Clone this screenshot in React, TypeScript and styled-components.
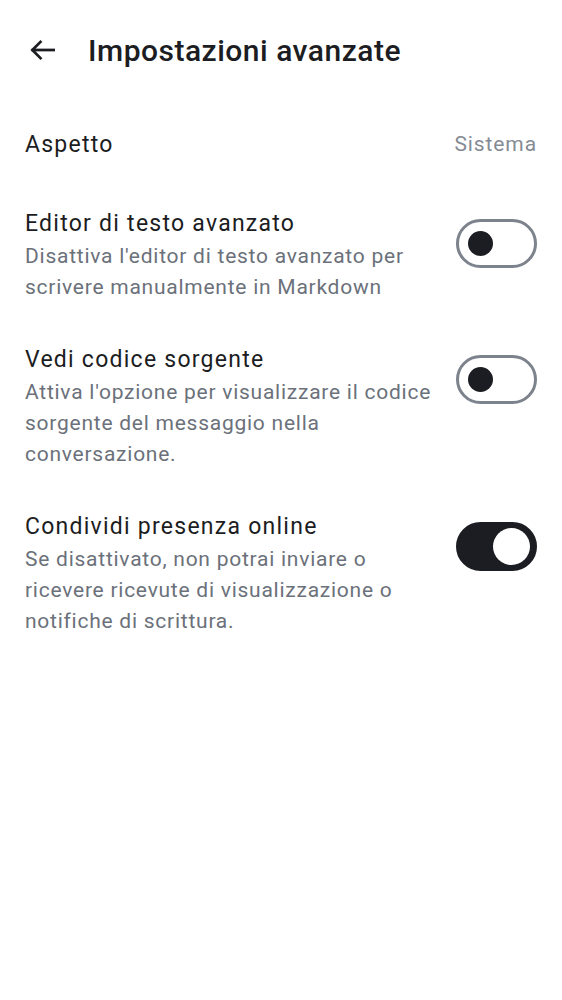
import * as React from "react";
import styled, { createGlobalStyle } from "styled-components";

const GlobalStyle = createGlobalStyle`
    html, body {
        margin: 0;
        padding: 0;
        background: #fff;
    }
    body {
        font-family: Roboto, "Noto Sans", sans-serif;
        color: #1c1d22;
    }
`;

type Setting = {
    title: string,
    desc: string,
    on: boolean
}

const settings: Setting[] = [
    {
        title: "Editor di testo avanzato",
        desc: "Disattiva l'editor di testo avanzato per scrivere manualmente in Markdown",
        on: false
    },
    {
        title: "Vedi codice sorgente",
        desc: "Attiva l'opzione per visualizzare il codice sorgente del messaggio nella conversazione.",
        on: false
    },
    {
        title: "Condividi presenza online",
        desc: "Se disattivato, non potrai inviare o ricevere ricevute di visualizzazione o notifiche di scrittura.",
        on: true
    }
];

const Page = styled.div`
    width: 562px;
    min-height: 1000px;
    background: #fff;
`;

const Header = styled.header`
    height: 100px;
    display: flex;
    align-items: center;
    padding: 0 0 0 28px;
    gap: 30px;
    box-sizing: border-box;
`;

const BackButton = styled.button`
    width: 30px;
    height: 30px;
    padding: 0;
    border: none;
    background: none;
    display: flex;
    align-items: center;
    justify-content: center;
    color: #1c1d22;
`;

const Title = styled.h1`
    margin: 0;
    font-size: 30px;
    font-weight: 500;
    letter-spacing: 0.5px;
    color: #1c1d22;
`;

const List = styled.div`
    display: flex;
    flex-direction: column;
    padding: 0 25px;
`;

const SimpleRow = styled.div`
    display: flex;
    justify-content: space-between;
    align-items: center;
    height: 88px;
`;

const RowLabel = styled.span`
    font-size: 23px;
    letter-spacing: 1.25px;
    color: #1c1d22;
`;

const RowValue = styled.span`
    font-size: 21px;
    letter-spacing: 0.9px;
    color: #858b94;
`;

const ToggleRow = styled.div`
    display: flex;
    justify-content: space-between;
    align-items: flex-start;
    gap: 20px;
    padding: 19px 0 21px;
`;

const TextBlock = styled.div`
    display: flex;
    flex-direction: column;
`;

const ItemTitle = styled.div`
    font-size: 23px;
    line-height: 34px;
    letter-spacing: 1.25px;
    color: #1c1d22;
`;

const ItemDesc = styled.div`
    font-size: 21px;
    line-height: 31px;
    letter-spacing: 0.75px;
    color: #6b717a;
`;

const Track = styled.div<{ $on: boolean }>`
    flex: none;
    width: 81px;
    height: 49px;
    margin-top: 12px;
    border-radius: 25px;
    box-sizing: border-box;
    border: 3px solid ${p => p.$on ? "#1c1d22" : "#7d838c"};
    background: ${p => p.$on ? "#1c1d22" : "#fff"};
    display: flex;
    align-items: center;
    justify-content: ${p => p.$on ? "flex-end" : "flex-start"};
    padding: 0 ${p => p.$on ? "4px" : "9px"};
`;

const Thumb = styled.div<{ $on: boolean }>`
    width: ${p => p.$on ? "37px" : "25px"};
    height: ${p => p.$on ? "37px" : "25px"};
    border-radius: 50%;
    background: ${p => p.$on ? "#fff" : "#1c1d22"};
`;

const Toggle = ({ on }: { on: boolean }) => (
    <Track $on={on}>
        <Thumb $on={on} />
    </Track>
);

export default function App() {
    return (
        <Page>
            <GlobalStyle />
            <Header>
                <BackButton aria-label="Indietro">
                    <svg width="30" height="30" viewBox="0 0 24 24" fill="none" stroke="currentColor" strokeWidth="2.2" strokeLinecap="square">
                        <path d="M20.5 12H4" />
                        <path d="M10 5.5L3.5 12l6.5 6.5" />
                    </svg>
                </BackButton>
                <Title>Impostazioni avanzate</Title>
            </Header>
            <List>
                <SimpleRow>
                    <RowLabel>Aspetto</RowLabel>
                    <RowValue>Sistema</RowValue>
                </SimpleRow>
                {settings.map(s => (
                    <ToggleRow key={s.title}>
                        <TextBlock>
                            <ItemTitle>{s.title}</ItemTitle>
                            <ItemDesc>{s.desc}</ItemDesc>
                        </TextBlock>
                        <Toggle on={s.on} />
                    </ToggleRow>
                ))}
            </List>
        </Page>
    );
}
